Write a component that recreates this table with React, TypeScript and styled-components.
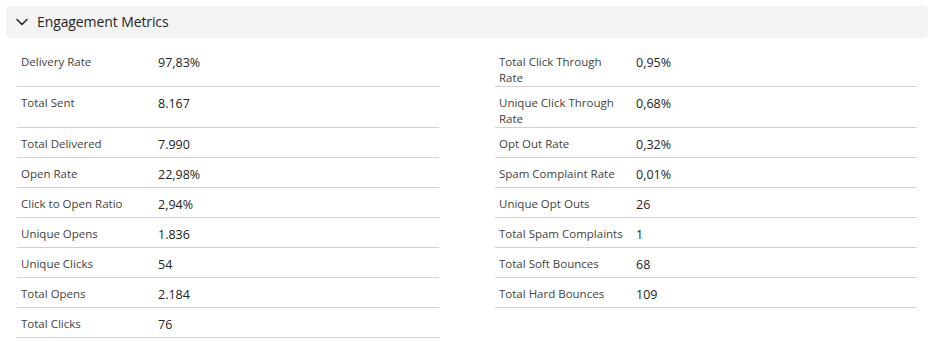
import React from "react";
import styled, { createGlobalStyle } from "styled-components";

const GlobalStyle = createGlobalStyle`
  html, body { margin: 0; padding: 0; background: #ffffff; }
  body { font-family: "Segoe UI", "Open Sans", "Noto Sans", sans-serif; }
  * { box-sizing: border-box; }
`;

const Page = styled.div`
  padding: 6px 9px 0 6px;
`;

const Header = styled.div`
  display: flex;
  align-items: center;
  gap: 9px;
  height: 32px;
  padding-left: 10px;
  background: #f3f3f3;
  border-radius: 4px;
  color: #242424;
  font-size: 14px;
`;

const Title = styled.span`
  line-height: 20px;
  letter-spacing: -0.1px;
`;

const Grid = styled.div`
  display: grid;
  grid-template-columns: 422px 422px;
  column-gap: 56px;
  padding: 8px 11px 0 11px;
`;

const Row = styled.div`
  display: grid;
  grid-template-columns: 124px 1fr;
  column-gap: 13px;
  align-items: start;
  min-height: 30px;
  padding: 8px 0 0 4px;
  border-bottom: 1px solid #d1d1d1;
`;

const Label = styled.div`
  font-size: 11.5px;
  line-height: 16px;
  color: #424242;
`;

const Value = styled.div`
  font-size: 12.5px;
  line-height: 16px;
  padding-top: 1px;
  color: #242424;
`;

const Chevron = () => (
  <svg width="12" height="8" viewBox="0 0 12 8" fill="none">
    <path d="M1 1.5 L6 6.5 L11 1.5" stroke="#242424" strokeWidth="1.5" strokeLinecap="round" strokeLinejoin="round" />
  </svg>
);

type Metric = { label: string; value: string };

const left: Metric[] = [
  { label: "Delivery Rate", value: "97,83%" },
  { label: "Total Sent", value: "8.167" },
  { label: "Total Delivered", value: "7.990" },
  { label: "Open Rate", value: "22,98%" },
  { label: "Click to Open Ratio", value: "2,94%" },
  { label: "Unique Opens", value: "1.836" },
  { label: "Unique Clicks", value: "54" },
  { label: "Total Opens", value: "2.184" },
  { label: "Total Clicks", value: "76" },
];

const right: Metric[] = [
  { label: "Total Click Through Rate", value: "0,95%" },
  { label: "Unique Click Through Rate", value: "0,68%" },
  { label: "Opt Out Rate", value: "0,32%" },
  { label: "Spam Complaint Rate", value: "0,01%" },
  { label: "Unique Opt Outs", value: "26" },
  { label: "Total Spam Complaints", value: "1" },
  { label: "Total Soft Bounces", value: "68" },
  { label: "Total Hard Bounces", value: "109" },
];

export default function App() {
  const cells: React.ReactNode[] = [];
  const n = Math.max(left.length, right.length);
  for (let i = 0; i < n; i++) {
    const l = left[i];
    const r = right[i];
    cells.push(
      l ? (
        <Row key={`l${i}`}>
          <Label>{l.label}</Label>
          <Value>{l.value}</Value>
        </Row>
      ) : (
        <div key={`l${i}`} />
      )
    );
    if (r) {
      cells.push(
        <Row key={`r${i}`}>
          <Label>{r.label}</Label>
          <Value>{r.value}</Value>
        </Row>
      );
    }
  }
  return (
    <>
      <GlobalStyle />
      <Page>
        <Header>
          <Chevron />
          <Title>Engagement Metrics</Title>
        </Header>
        <Grid>{cells}</Grid>
      </Page>
    </>
  );
}
